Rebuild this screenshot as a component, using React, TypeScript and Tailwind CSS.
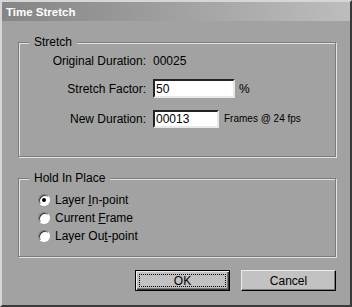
import React, { useState } from 'react';

const font = { fontFamily: '"Liberation Sans", Arial, sans-serif' };

const GroupBox: React.FC<{ label: string; className?: string; children: React.ReactNode }> = ({ label, className, children }) => (
  <div className={`relative border border-[#7c7c7c] shadow-[1px_1px_0_#e2e2e2,inset_1px_1px_0_#e2e2e2] ${className || ''}`}>
    <span className="absolute left-[10px] top-[-8px] px-[5px] bg-[#a2a2a2] text-[12px] leading-[14px] text-black">{label}</span>
    {children}
  </div>
);

const Radio: React.FC<{ checked: boolean; onClick: () => void; children: React.ReactNode }> = ({ checked, onClick, children }) => (
  <div className="flex items-center h-[18px] gap-[5px] cursor-default" onClick={onClick}>
    <div className="w-[12px] h-[12px] rounded-full border border-t-[#7c7c7c] border-l-[#7c7c7c] border-b-white border-r-white bg-white shadow-[inset_1px_1px_0_#303030] flex items-center justify-center">
      {checked && <div className="w-[4px] h-[4px] rounded-full bg-black"></div>}
    </div>
    <span className="text-[12px] leading-[14px] text-black">{children}</span>
  </div>
);

const App: React.FC = () => {
  const [hold, setHold] = useState('in');
  const [factor, setFactor] = useState('50');
  const [dur, setDur] = useState('00013');

  return (
    <div style={font} className="w-[352px] h-[307px] bg-[#a2a2a2] border-2 border-t-[#d6d6d6] border-l-[#d6d6d6] border-r-[#3a3a3a] border-b-[#3a3a3a] flex flex-col">
      <div className="h-[19px] shrink-0 bg-gradient-to-r from-[#858585] to-[#bdbdbd] flex items-center pl-[4px]">
        <span className="text-white font-bold text-[11.5px] leading-[14px]">Time Stretch</span>
      </div>

      <div className="flex-1 flex flex-col pl-[16px] pr-[14px] pt-[21px]">
        <GroupBox label="Stretch" className="h-[115px]">
          <div className="grid grid-cols-[127px_auto] gap-x-[7px] items-center pt-[8px] text-[12px] leading-[14px] text-black">
            <div className="text-right h-[19px] flex items-center justify-end">Original Duration:</div>
            <div className="h-[19px] flex items-center">00025</div>

            <div className="text-right h-[19px] mt-[9px] flex items-center justify-end">Stretch Factor:</div>
            <div className="h-[19px] mt-[9px] flex items-center gap-[4px]">
              <input
                value={factor}
                onChange={e => setFactor(e.target.value)}
                className="w-[82px] h-[19px] bg-white outline-none px-[1px] text-[12px] text-black border-2 border-t-[#222] border-l-[#222] border-b-[#e8e8e8] border-r-[#e8e8e8]"
                style={font}
              />
              <span>%</span>
            </div>

            <div className="text-right h-[19px] mt-[11px] flex items-center justify-end">New Duration:</div>
            <div className="h-[19px] mt-[11px] flex items-center gap-[5px]">
              <input
                value={dur}
                onChange={e => setDur(e.target.value)}
                className="w-[66px] h-[18px] bg-white outline-none px-[1px] text-[12px] text-black border-2 border-t-[#222] border-l-[#222] border-b-[#e8e8e8] border-r-[#e8e8e8]"
                style={font}
              />
              <span className="text-[10px]">Frames @ 24 fps</span>
            </div>
          </div>
        </GroupBox>

        <GroupBox label="Hold In Place" className="h-[79px] mt-[21px]">
          <div className="flex flex-col pt-[12px] pl-[19px]">
            <Radio checked={hold === 'in'} onClick={() => setHold('in')}>Layer <u>I</u>n-point</Radio>
            <Radio checked={hold === 'cur'} onClick={() => setHold('cur')}>Current <u>F</u>rame</Radio>
            <Radio checked={hold === 'out'} onClick={() => setHold('out')}>Layer Ou<u>t</u>-point</Radio>
          </div>
        </GroupBox>

        <div className="flex justify-end gap-[11px] mt-[13px]">
          <button className="w-[95px] h-[21px] bg-[#c2c2c2] border border-black shadow-[inset_1px_1px_0_#ececec,inset_-1px_-1px_0_#3a3a3a,inset_-2px_-2px_0_#7c7c7c] flex items-center justify-center p-[3px]">
            <span className="w-full h-full border border-dotted border-black flex items-center justify-center text-[12px] leading-[14px] text-black">OK</span>
          </button>
          <button className="w-[95px] h-[21px] bg-[#c2c2c2] border border-t-[#ececec] border-l-[#ececec] border-b-black border-r-black shadow-[inset_-1px_-1px_0_#7c7c7c] flex items-center justify-center text-[12px] leading-[14px] text-black">
            Cancel
          </button>
        </div>
      </div>
    </div>
  );
};

export default App;
